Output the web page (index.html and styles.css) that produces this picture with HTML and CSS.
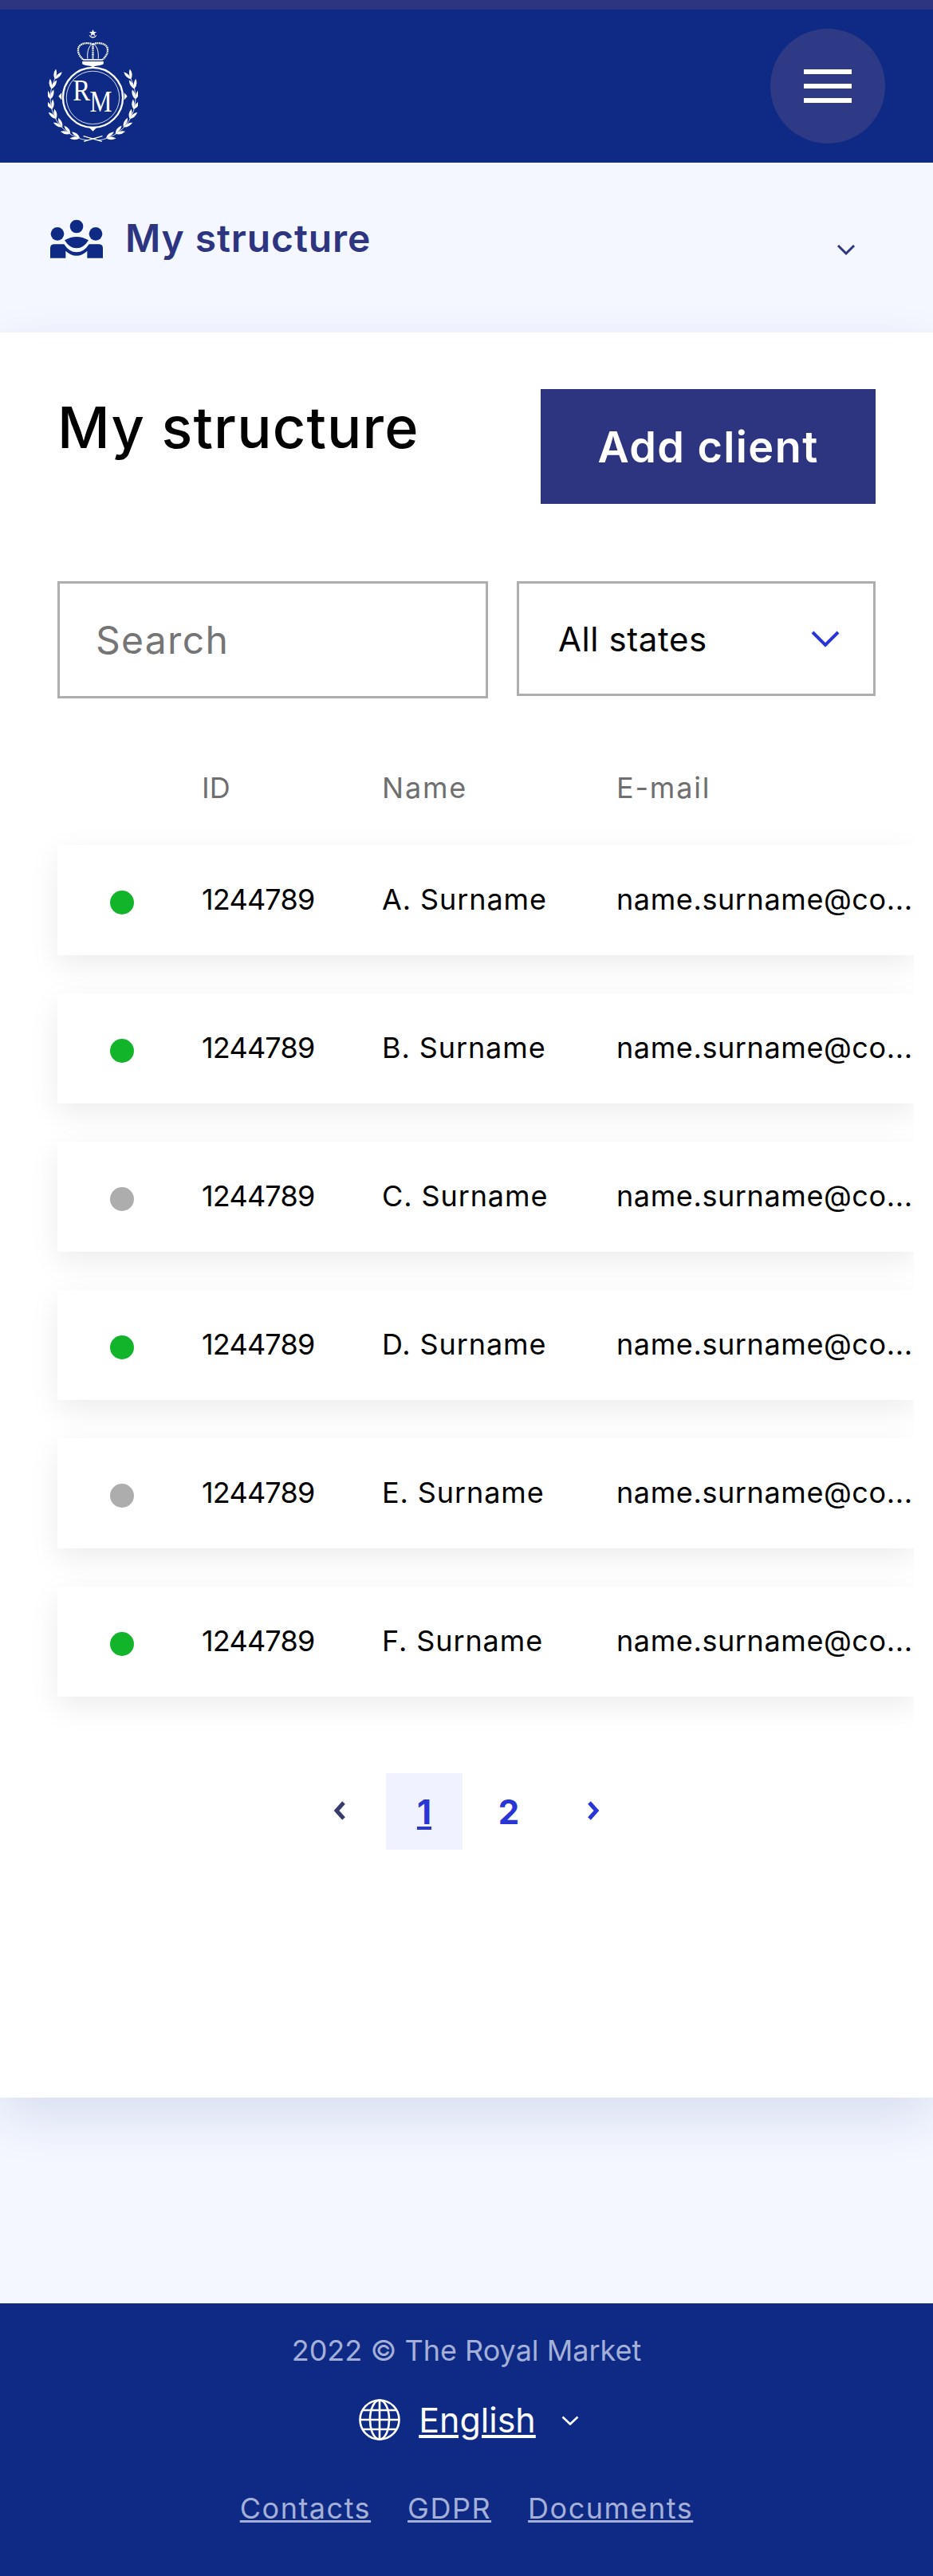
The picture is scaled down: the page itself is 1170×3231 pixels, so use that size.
FILE: index.html
```html
<!DOCTYPE html>
<html lang="en">
<head>
    <meta charset="UTF-8">
    <meta name="viewport" content="width=device-width, initial-scale=1.0">
    <title>My structure - The Royal Market</title>
    <link rel="stylesheet" href="styles.css">
</head>
<body>
    <div class="top-strip"></div>
    <header class="header">
        <svg class="logo" viewBox="90 45 340 430" fill="#fff">
            <defs>
                <g id="leaves">
                    <path d="M100 305q-17-12-13-36q15 13 13 36z"/>
                    <path d="M100 305q17-12 13-36q-15 13-13 36z"/>
                </g>
                <g id="wreath">
                    <path d="M125 220A160 160 0 0 0 240 466" fill="none" stroke="#fff" stroke-width="2.5"/>
                    <use href="#leaves" transform="rotate(-72 260 305)"/>
                    <use href="#leaves" transform="rotate(-58 260 305)"/>
                    <use href="#leaves" transform="rotate(-44 260 305)"/>
                    <use href="#leaves" transform="rotate(-30 260 305)"/>
                    <use href="#leaves" transform="rotate(-16 260 305)"/>
                    <use href="#leaves" transform="rotate(-2 260 305)"/>
                    <use href="#leaves" transform="rotate(12 260 305)"/>
                    <use href="#leaves" transform="rotate(26 260 305)"/>
                    <path d="M226 470L296 450" fill="none" stroke="#fff" stroke-width="4"/>
                </g>
            </defs>
            <!-- star and crescent -->
            <path d="M260 48l4 9h10l-8 6l3 10l-9-6l-9 6l3-10l-8-6h10z"/>
            <path d="M247 70a14 14 0 0 0 26 0a16 16 0 0 1-26 0z" stroke="#fff" stroke-width="2"/>
            <!-- crown -->
            <g fill="none" stroke="#fff">
                <path d="M222 160C205 145 200 125 208 112C218 98 245 96 260 104C275 96 302 98 312 112C320 125 315 145 298 160" stroke-width="7" stroke-dasharray="5 2"/>
                <path d="M260 104V158" stroke-width="7" stroke-dasharray="5 2"/>
                <path d="M240 158C238 135 242 115 255 104M280 158C282 135 278 115 265 104" stroke-width="3"/>
                <path d="M222 162H298" stroke-width="5"/>
            </g>
            <path d="M220 168H300V178C290 186 272 182 260 190C248 182 230 186 220 178z"/>
            <!-- medallion -->
            <g fill="none" stroke="#fff">
                <circle cx="260" cy="305" r="113" stroke-width="7"/>
                <circle cx="260" cy="305" r="100" stroke-width="2.5"/>
            </g>
            <path d="M130 300l12-14v28zM390 300l-12-14v28zM260 432l-14-14h28z"/>
            <text class="logo-letter" x="184" y="317" font-size="112" textLength="66" lengthAdjust="spacingAndGlyphs">R</text>
            <text class="logo-letter" x="248" y="359" font-size="112" textLength="84" lengthAdjust="spacingAndGlyphs">M</text>
            <!-- laurel -->
            <use href="#wreath"/>
            <use href="#wreath" transform="translate(520 0) scale(-1 1)"/>
        </svg>
        <button class="burger" aria-label="Menu"><span></span><span></span><span></span></button>
    </header>

    <div class="section-bar">
        <svg class="people-icon" viewBox="0 0 255 192" fill="#0e2a84">
            <circle cx="123" cy="48" r="25"/>
            <circle cx="51" cy="76" r="25"/>
            <circle cx="195" cy="76" r="25"/>
            <path d="M78 100Q123 74 168 100Q150 130 123 130Q96 130 78 100z"/>
            <path d="M24 167V130Q24 115 40 115H76Q95 145 123 145Q151 145 170 115H206Q222 115 222 130V167H163V140Q145 158 123 158Q101 158 82 140V167z"/>
        </svg>
        <span class="section-name">My structure</span>
        <svg class="section-chevron" viewBox="0 0 24 16" fill="none" stroke="#2e3580" stroke-width="3"><path d="M2 3l10 10L22 3"/></svg>
    </div>

    <main class="main">
        <div class="title-row">
            <h1 class="title">My structure</h1>
            <button class="add-btn">Add client</button>
        </div>

        <div class="filters">
            <input class="search" type="text" placeholder="Search">
            <div class="state-select">
                <span>All states</span>
                <svg viewBox="0 0 36 22" fill="none" stroke="#2a35d6" stroke-width="4"><path d="M2 3l16 16L34 3"/></svg>
            </div>
        </div>

        <div class="table-wrap">
            <div class="table-head">
                <div class="col-state"></div>
                <div class="col-id">ID</div>
                <div class="col-name">Name</div>
                <div class="col-mail">E-mail</div>
            </div>
            <div class="row">
                <div class="col-state"><i class="dot on"></i></div>
                <div class="col-id">1244789</div>
                <div class="col-name">A. Surname</div>
                <div class="col-mail">name.surname@co...</div>
            </div>
            <div class="row">
                <div class="col-state"><i class="dot on"></i></div>
                <div class="col-id">1244789</div>
                <div class="col-name">B. Surname</div>
                <div class="col-mail">name.surname@co...</div>
            </div>
            <div class="row">
                <div class="col-state"><i class="dot"></i></div>
                <div class="col-id">1244789</div>
                <div class="col-name">C. Surname</div>
                <div class="col-mail">name.surname@co...</div>
            </div>
            <div class="row">
                <div class="col-state"><i class="dot on"></i></div>
                <div class="col-id">1244789</div>
                <div class="col-name">D. Surname</div>
                <div class="col-mail">name.surname@co...</div>
            </div>
            <div class="row">
                <div class="col-state"><i class="dot"></i></div>
                <div class="col-id">1244789</div>
                <div class="col-name">E. Surname</div>
                <div class="col-mail">name.surname@co...</div>
            </div>
            <div class="row">
                <div class="col-state"><i class="dot on"></i></div>
                <div class="col-id">1244789</div>
                <div class="col-name">F. Surname</div>
                <div class="col-mail">name.surname@co...</div>
            </div>
        </div>

        <nav class="pager">
            <a class="pager-arrow" href="#"><svg viewBox="0 0 16 24" fill="none" stroke="#383c6c" stroke-width="5"><path d="M13 2L4 12l9 10"/></svg></a>
            <a class="pager-num current" href="#">1</a>
            <a class="pager-num" href="#">2</a>
            <a class="pager-arrow" href="#"><svg viewBox="0 0 16 24" fill="none" stroke="#2a35d6" stroke-width="5"><path d="M3 2l9 10L3 22"/></svg></a>
        </nav>
    </main>

    <footer class="footer">
        <div class="copyright">2022 © The Royal Market</div>
        <div class="language">
            <svg class="globe" viewBox="0 0 52 52" fill="none" stroke="#fff" stroke-width="2.6">
                <circle cx="26" cy="26" r="24.5"/>
                <ellipse cx="26" cy="26" rx="12" ry="24.5"/>
                <path d="M26 1.500V50.500M1.500 26H50.500M5 14H47M5 38H47"/>
            </svg>
            <a href="#">English</a>
            <svg class="lang-chevron" viewBox="0 0 22 12" fill="none" stroke="#fff" stroke-width="2.600"><path d="M1.500 1.500L11 10.500l9.500-9"/></svg>
        </div>
        <div class="footer-links">
            <a href="#">Contacts</a>
            <a href="#">GDPR</a>
            <a href="#">Documents</a>
        </div>
    </footer>
</body>
</html>
```

FILE: styles.css
```css
body {
    margin: 0;
    background-color: #f4f7ff;
    font-family: Inter, "Noto Sans", sans-serif;
    color: #000;
}
.top-strip {
    height: 12px;
    background-color: #2e3580;
}
.header {
    display: flex;
    justify-content: space-between;
    align-items: flex-start;
    height: 192px;
    box-sizing: border-box;
    padding: 24px 60px 0 60px;
    background-color: #0e2a84;
}
.logo {
    width: 113px;
    height: 143px;
}
.logo-letter {
    font-family: "Liberation Serif", serif;
}
.burger {
    display: flex;
    flex-direction: column;
    align-items: center;
    justify-content: center;
    gap: 12px;
    width: 144px;
    height: 144px;
    border: 0;
    border-radius: 50%;
    padding: 0;
    background-color: #2e3a85;
}
.burger span {
    width: 60px;
    height: 6px;
    background-color: #fff;
}
.section-bar {
    display: flex;
    align-items: flex-start;
    height: 213px;
    box-sizing: border-box;
    padding: 64px 97px 0 55px;
}
.people-icon {
    width: 85px;
    height: 64px;
}
.section-name {
    margin: 2px 0 0 17px;
    font-size: 48px;
    line-height: 58px;
    font-weight: 600;
    letter-spacing: 0.9px;
    color: #2e3580;
}
.section-chevron {
    width: 24px;
    height: 16px;
    margin: 37px 0 0 auto;
}
.main {
    position: relative;
    height: 2214px;
    box-sizing: border-box;
    padding: 71px 72px 0;
    background-color: #fff;
    box-shadow: 0 24px 60px rgba(14, 42, 132, 0.12);
}
.title-row {
    display: flex;
    justify-content: space-between;
    align-items: flex-start;
}
.title {
    margin: 4px 0 0;
    font-size: 72px;
    line-height: 88px;
    font-weight: 500;
    letter-spacing: 1.2px;
}
.add-btn {
    width: 420px;
    height: 144px;
    border: 0;
    padding: 0;
    background-color: #2e3580;
    color: #fff;
    font-family: inherit;
    font-size: 54px;
    font-weight: 600;
    letter-spacing: 1.4px;
}
.filters {
    display: flex;
    align-items: flex-start;
    gap: 36px;
    margin-top: 97px;
}
.search {
    width: 540px;
    height: 147px;
    box-sizing: border-box;
    border: 3px solid #aeaeae;
    border-radius: 0;
    padding: 0 45px;
    font-family: inherit;
    font-size: 48px;
    letter-spacing: 1.3px;
    outline: none;
}
.search::placeholder {
    color: #757575;
    opacity: 1;
}
.state-select {
    display: flex;
    align-items: center;
    justify-content: space-between;
    width: 450px;
    height: 144px;
    box-sizing: border-box;
    border: 3px solid #aeaeae;
    padding: 0 42px 0 49px;
    font-size: 42px;
    letter-spacing: 0.6px;
}
.state-select svg {
    width: 36px;
    height: 22px;
}
.table-wrap {
    margin: 64px -48px 0 -72px;
    padding: 0 0 48px 72px;
    overflow: hidden;
    font-size: 36px;
}
.table-head {
    display: flex;
    align-items: center;
    height: 96px;
    margin-bottom: 24px;
    color: #6f6f6f;
}
.table-head .col-name,
.table-head .col-mail {
    letter-spacing: 1.8px;
}
.row {
    display: flex;
    align-items: center;
    height: 138px;
    box-sizing: border-box;
    padding-bottom: 3px;
    margin-bottom: 48px;
    background-color: #fff;
    box-shadow: 0 12px 36px rgba(0, 0, 0, 0.08);
}
.row:last-child {
    margin-bottom: 0;
}
.row .col-id {
    letter-spacing: -0.8px;
}
.row .col-name {
    letter-spacing: 0.9px;
}
.row .col-mail {
    letter-spacing: 0.6px;
}
.col-state {
    display: flex;
    justify-content: center;
    width: 181px;
}
.col-id {
    width: 226px;
}
.col-name {
    width: 294px;
}
.col-mail {
    flex: 1;
    min-width: 0;
    white-space: nowrap;
}
.dot {
    width: 30px;
    height: 30px;
    margin: 9px 19px 0 0;
    border-radius: 50%;
    background-color: #adadad;
}
.dot.on {
    background-color: #12b52a;
}
.pager {
    display: flex;
    justify-content: center;
    gap: 10px;
    margin-top: 48px;
}
.pager-arrow,
.pager-num {
    display: flex;
    align-items: center;
    justify-content: center;
    width: 96px;
    height: 96px;
}
.pager-arrow svg {
    width: 16px;
    height: 24px;
    margin-bottom: 3px;
}
.pager-num {
    font-size: 42px;
    font-weight: 700;
    color: #2a35d6;
    text-decoration: none;
}
.pager-num.current {
    background-color: #f0f3ff;
    text-decoration: underline;
}
.footer {
    display: flex;
    flex-direction: column;
    align-items: center;
    height: 342px;
    box-sizing: border-box;
    margin-top: 258px;
    padding-top: 37px;
    background-color: #0e2a84;
    color: #a5b0d8;
    font-size: 36px;
}
.copyright {
    line-height: 44px;
}
.language {
    display: flex;
    align-items: center;
    margin-top: 39px;
    padding-left: 6px;
}
.language a {
    margin-left: 23px;
    color: #fff;
    font-size: 43px;
}
.globe {
    width: 52px;
    height: 52px;
}
.lang-chevron {
    width: 22px;
    height: 12px;
    margin: 2px 0 0 32px;
}
.footer-links {
    display: flex;
    gap: 46px;
    margin-top: 63px;
}
.footer-links a {
    color: #a5b0d8;
    letter-spacing: 1.5px;
}
```
